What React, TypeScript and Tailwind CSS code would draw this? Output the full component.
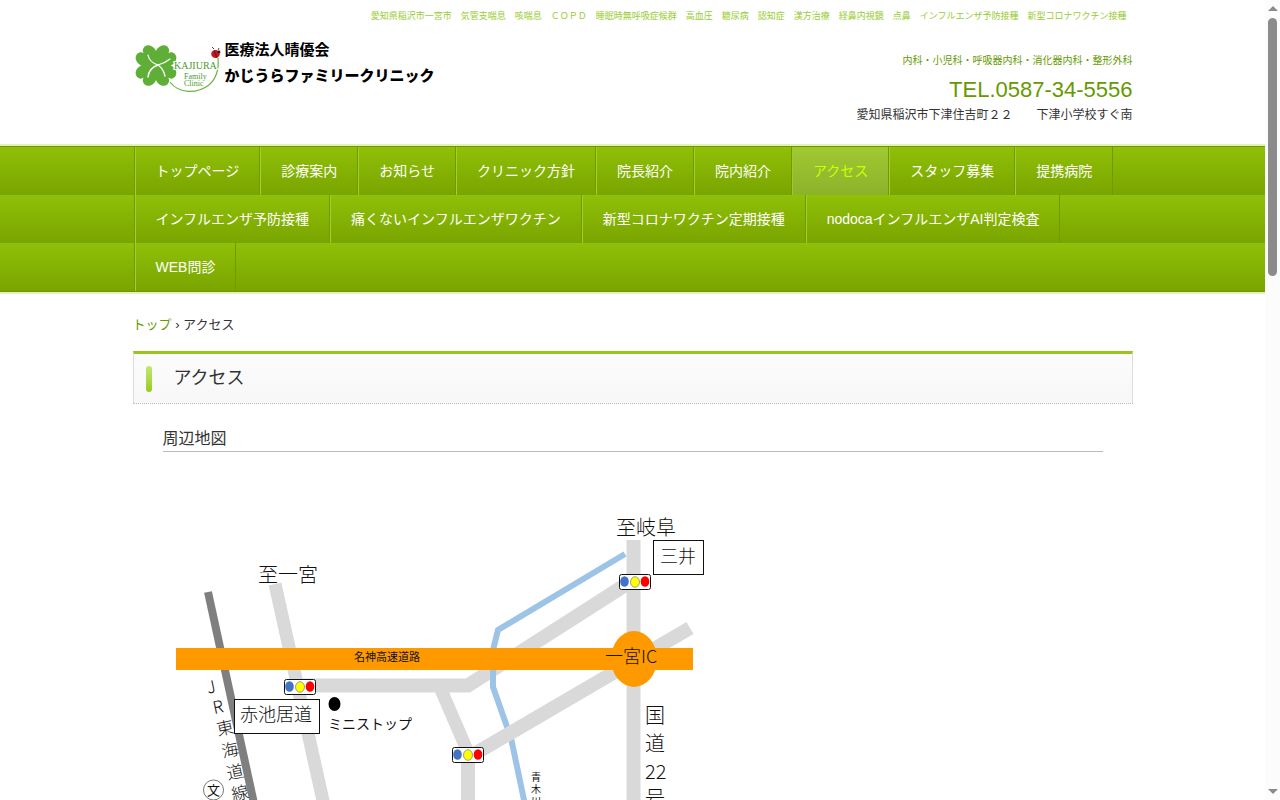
import clsx from "clsx";

const NAV_ROWS = [
  ["トップページ", "診療案内", "お知らせ", "クリニック方針", "院長紹介", "院内紹介", "アクセス", "スタッフ募集", "提携病院"],
  ["インフルエンザ予防接種", "痛くないインフルエンザワクチン", "新型コロナワクチン定期接種", "nodocaインフルエンザAI判定検査"],
  ["WEB問診"],
];

const Logo = () => {
  return (
    <a href="#" className="flex gap-1 text-black">
      <svg width="86" height="56" viewBox="0 0 86 56" aria-hidden="true">
        <g fill="#5fae38" transform="translate(21 25.5)">
          {[45, 135, 225, 315].map((angle) => (
            <path
              key={angle}
              transform={`rotate(${angle})`}
              d="M0 2L-9 -8C-13 -13 -11 -21 -5.5 -21.5C-2.5 -21.5 -0.6 -20 0 -17.5C0.6 -20 2.5 -21.5 5.5 -21.5C11 -21 13 -13 9 -8Z"
            />
          ))}
        </g>
        <g fill="none" stroke="#fff" strokeLinecap="round">
          <path d="M13 15Q14 22 23 25Q30 23 35 19" strokeWidth="1.2" />
          <path d="M13 37Q14 28 23 25Q28 28 30 36" strokeWidth="1.4" />
        </g>
        <path d="M35 42C44 54 62 54 74 45C82 38 84 29 83 18" fill="none" stroke="#6db33f" strokeWidth="1.2" />
        <path d="M79 9L77 7M83 10L84 8" stroke="#222" strokeWidth="0.8" />
        <ellipse cx="80.5" cy="14" rx="4.3" ry="4" fill="#c4161c" />
        <path d="M79 10L82 18" stroke="#5d0b0e" strokeWidth="0.7" />
        <circle cx="84" cy="12" r="1.4" fill="#222" />
        <g fill="#4d9a2c" fontFamily="Liberation Serif, serif">
          <text x="39" y="29" fontSize="10" stroke="#fff" strokeWidth="2" paintOrder="stroke">KAJIURA</text>
          <text x="49" y="39" fontSize="8">Family</text>
          <text x="49" y="46" fontSize="8">Clinic</text>
        </g>
      </svg>
      <span className="flex flex-col font-bold text-[15px]">
        <span className="leading-5">医療法人晴優会</span>
        <span className="font-black leading-8">かじうらファミリークリニック</span>
      </span>
    </a>
  );
};

const Signal = ({ x, y }: { x: number; y: number }) => (
  <g transform={`translate(${x} ${y})`}>
    <rect width="31" height="15" rx="2" fill="#fff" stroke="#111" />
    <ellipse cx="5" cy="7" rx="4.3" ry="5.3" fill="#4472c4" />
    <ellipse cx="15.5" cy="7.5" rx="4.5" ry="5.3" fill="#ff0" stroke="#777" strokeWidth="0.7" />
    <ellipse cx="25.5" cy="7" rx="4.3" ry="5.3" fill="#f00" />
  </g>
);

const JR_LABEL = [
  { char: "J", x: 48, y: 187 },
  { char: "R", x: 55, y: 207 },
  { char: "東", x: 62, y: 228 },
  { char: "海", x: 67, y: 250 },
  { char: "道", x: 72, y: 272 },
  { char: "線", x: 77, y: 293 },
];

const AccessMap = () => {
  return (
    <svg
      width="560"
      height="400"
      viewBox="0 0 560 400"
      role="img"
      aria-label="周辺地図"
      fill="#111"
      className="font-['Noto_Sans_CJK_JP',sans-serif] font-light"
    >
      <g fill="none" stroke="#d9d9d9" strokeWidth="14">
        <path d="M112 84L182 400" strokeWidth="13" />
        <path d="M140 185.5H305L467 82" />
        <path d="M470.5 40V400" />
        <path d="M276 185L304 250" strokeWidth="13" />
        <path d="M305 254V400" />
      </g>
      <path
        d="M462 54L335 130L330 150V187L348 238L361 300L379 400"
        fill="none"
        stroke="#9dc3e6"
        strokeWidth="6"
      />
      <path d="M308 256L527 128" stroke="#d9d9d9" strokeWidth="14" />
      <path d="M45 92L112 400" stroke="#7f7f7f" strokeWidth="8" />
      <rect x="13" y="148" width="517" height="22" fill="#f90" />
      <ellipse cx="471" cy="159" rx="23" ry="28" fill="#f90" />

      <Signal x={121.5} y={179.5} />
      <Signal x={456.5} y={74.5} />
      <Signal x={289.5} y={247.5} />

      <g fill="#fff" stroke="#111">
        <rect x="71.5" y="199.5" width="85" height="34" />
        <rect x="490.5" y="40.5" width="50" height="34" />
        <circle cx="50.5" cy="290" r="10" stroke="#777" />
      </g>
      <ellipse cx="171.5" cy="204" rx="6" ry="7" fill="#000" />

      <g fontSize="20">
        <text x="95" y="82">至一宮</text>
        <text x="453" y="35">至岐阜</text>
        <text x="482" y="223">国</text>
        <text x="482" y="251">道</text>
        <text x="482" y="279">22</text>
        <text x="482" y="306">号</text>
      </g>
      <g fontSize="18">
        <text x="77" y="221">赤池居道</text>
        <text x="497" y="63">三井</text>
        <text x="442" y="163">一宮IC</text>
      </g>
      <text x="191" y="161" fontSize="11" className="font-normal">名神高速道路</text>
      <text x="165" y="229" fontSize="14" className="font-normal">ミニストップ</text>
      <g fontSize="10" className="font-normal">
        <text x="368" y="281">青</text>
        <text x="368" y="293">木</text>
        <text x="368" y="305">川</text>
      </g>
      <text x="50.5" y="295" fontSize="13" textAnchor="middle" className="font-normal">文</text>
      <g fontSize="17" textAnchor="middle">
        {JR_LABEL.map(({ char, x, y }) => (
          <text key={char} transform={`translate(${x} ${y}) rotate(-12)`} y="6">
            {char}
          </text>
        ))}
      </g>
    </svg>
  );
};

const Header = () => {
  return (
    <header className="mx-auto w-full max-w-[1000px] h-36">
      <h1 className="pt-2 pr-1.5 text-right text-[9px] leading-4 text-[#99cc33]">
        愛知県稲沢市一宮市　気管支喘息　咳喘息　ＣＯＰＤ　睡眠時無呼吸症候群　高血圧　糖尿病　認知症　漢方治療　経鼻内視鏡　点鼻　インフルエンザ予防接種　新型コロナワクチン接種
      </h1>
      <div className="flex justify-between pt-4 pl-0.5">
        <Logo />
        <div className="pt-[13px] text-right">
          <p className="text-[10px] leading-4 text-[#669900]">内科・小児科・呼吸器内科・消化器内科・整形外科</p>
          <p className="pt-[7px] text-[22px] leading-7 text-[#669900]">TEL.0587-34-5556</p>
          <p className="text-xs leading-[22px]">愛知県稲沢市下津住吉町２２　　下津小学校すぐ南</p>
        </div>
      </div>
    </header>
  );
};

const Nav = () => {
  return (
    <nav className="border-y-2 border-[#e3f3b5]">
      <div className="border-y border-[#6f9600]">
        {NAV_ROWS.map((row, i) => (
          <div key={i} className="bg-linear-to-b from-[#90c008] to-[#7aa400]">
            <div className="mx-auto max-w-[1000px] pl-px">
              <ul className="flex border-l border-[#719a00]">
                {row.map((item) => {
                  const active = item === "アクセス";
                  return (
                    <li
                      key={item}
                      className={clsx(
                        "border-x border-r-[#719a00]",
                        active ? "border-l-[#a0c931] bg-linear-to-b from-[#a0c931] to-[#8db22b]" : "border-l-[#a4cf2c]"
                      )}
                    >
                      <a
                        href="#"
                        className={clsx("block px-5 text-sm leading-12", active ? "text-[#ccff00]" : "text-white")}
                      >
                        {item}
                      </a>
                    </li>
                  );
                })}
              </ul>
            </div>
          </div>
        ))}
      </div>
    </nav>
  );
};

const ScrollBar = () => {
  return (
    <div aria-hidden="true" className="flex w-[15px] shrink-0 flex-col items-center bg-[#fcfcfc] py-1.5">
      <svg width="10" height="5" viewBox="0 0 10 5" fill="#8b8b8b">
        <path d="M5 0L10 5H0Z" />
      </svg>
      <div className="mt-[7px] h-[258px] w-[9px] rounded-full bg-[#8b8b8b]" />
      <svg width="10" height="5" viewBox="0 0 10 5" fill="#8b8b8b" className="mt-auto">
        <path d="M0 0H10L5 5Z" />
      </svg>
    </div>
  );
};

export default function App() {
  return (
    <div className="flex h-screen overflow-hidden bg-white font-['Liberation_Sans','Noto_Sans_CJK_JP',sans-serif] text-[#333333]">
      <div className="min-w-0 flex-1 overflow-hidden">
        <Header />
        <Nav />
        <main className="mx-auto w-full max-w-[1000px]">
          <p className="pt-[21px] text-[13px] leading-5">
            <a href="#" className="text-[#669900]">
              トップ
            </a>{" "}
            › アクセス
          </p>
          <h2 className="mt-4 flex items-center gap-[22px] border border-t-3 border-[#dddddd] border-t-[#99c61d] border-b-[#bbbbbb] [border-bottom-style:dotted] bg-linear-to-b from-[#fcfcfc] to-[#f7f7f7] px-3 text-lg leading-[49px]">
            <span className="h-[26px] w-1.5 rounded-sm bg-linear-to-b from-[#c3e66e] to-[#99cc11]" />
            アクセス
          </h2>
          <section className="px-[30px] pt-[23px]">
            <h3 className="border-b border-[#bbbbbb] text-base leading-6">周辺地図</h3>
            <div className="pt-12">
              <AccessMap />
            </div>
          </section>
        </main>
      </div>
      <ScrollBar />
    </div>
  );
}
